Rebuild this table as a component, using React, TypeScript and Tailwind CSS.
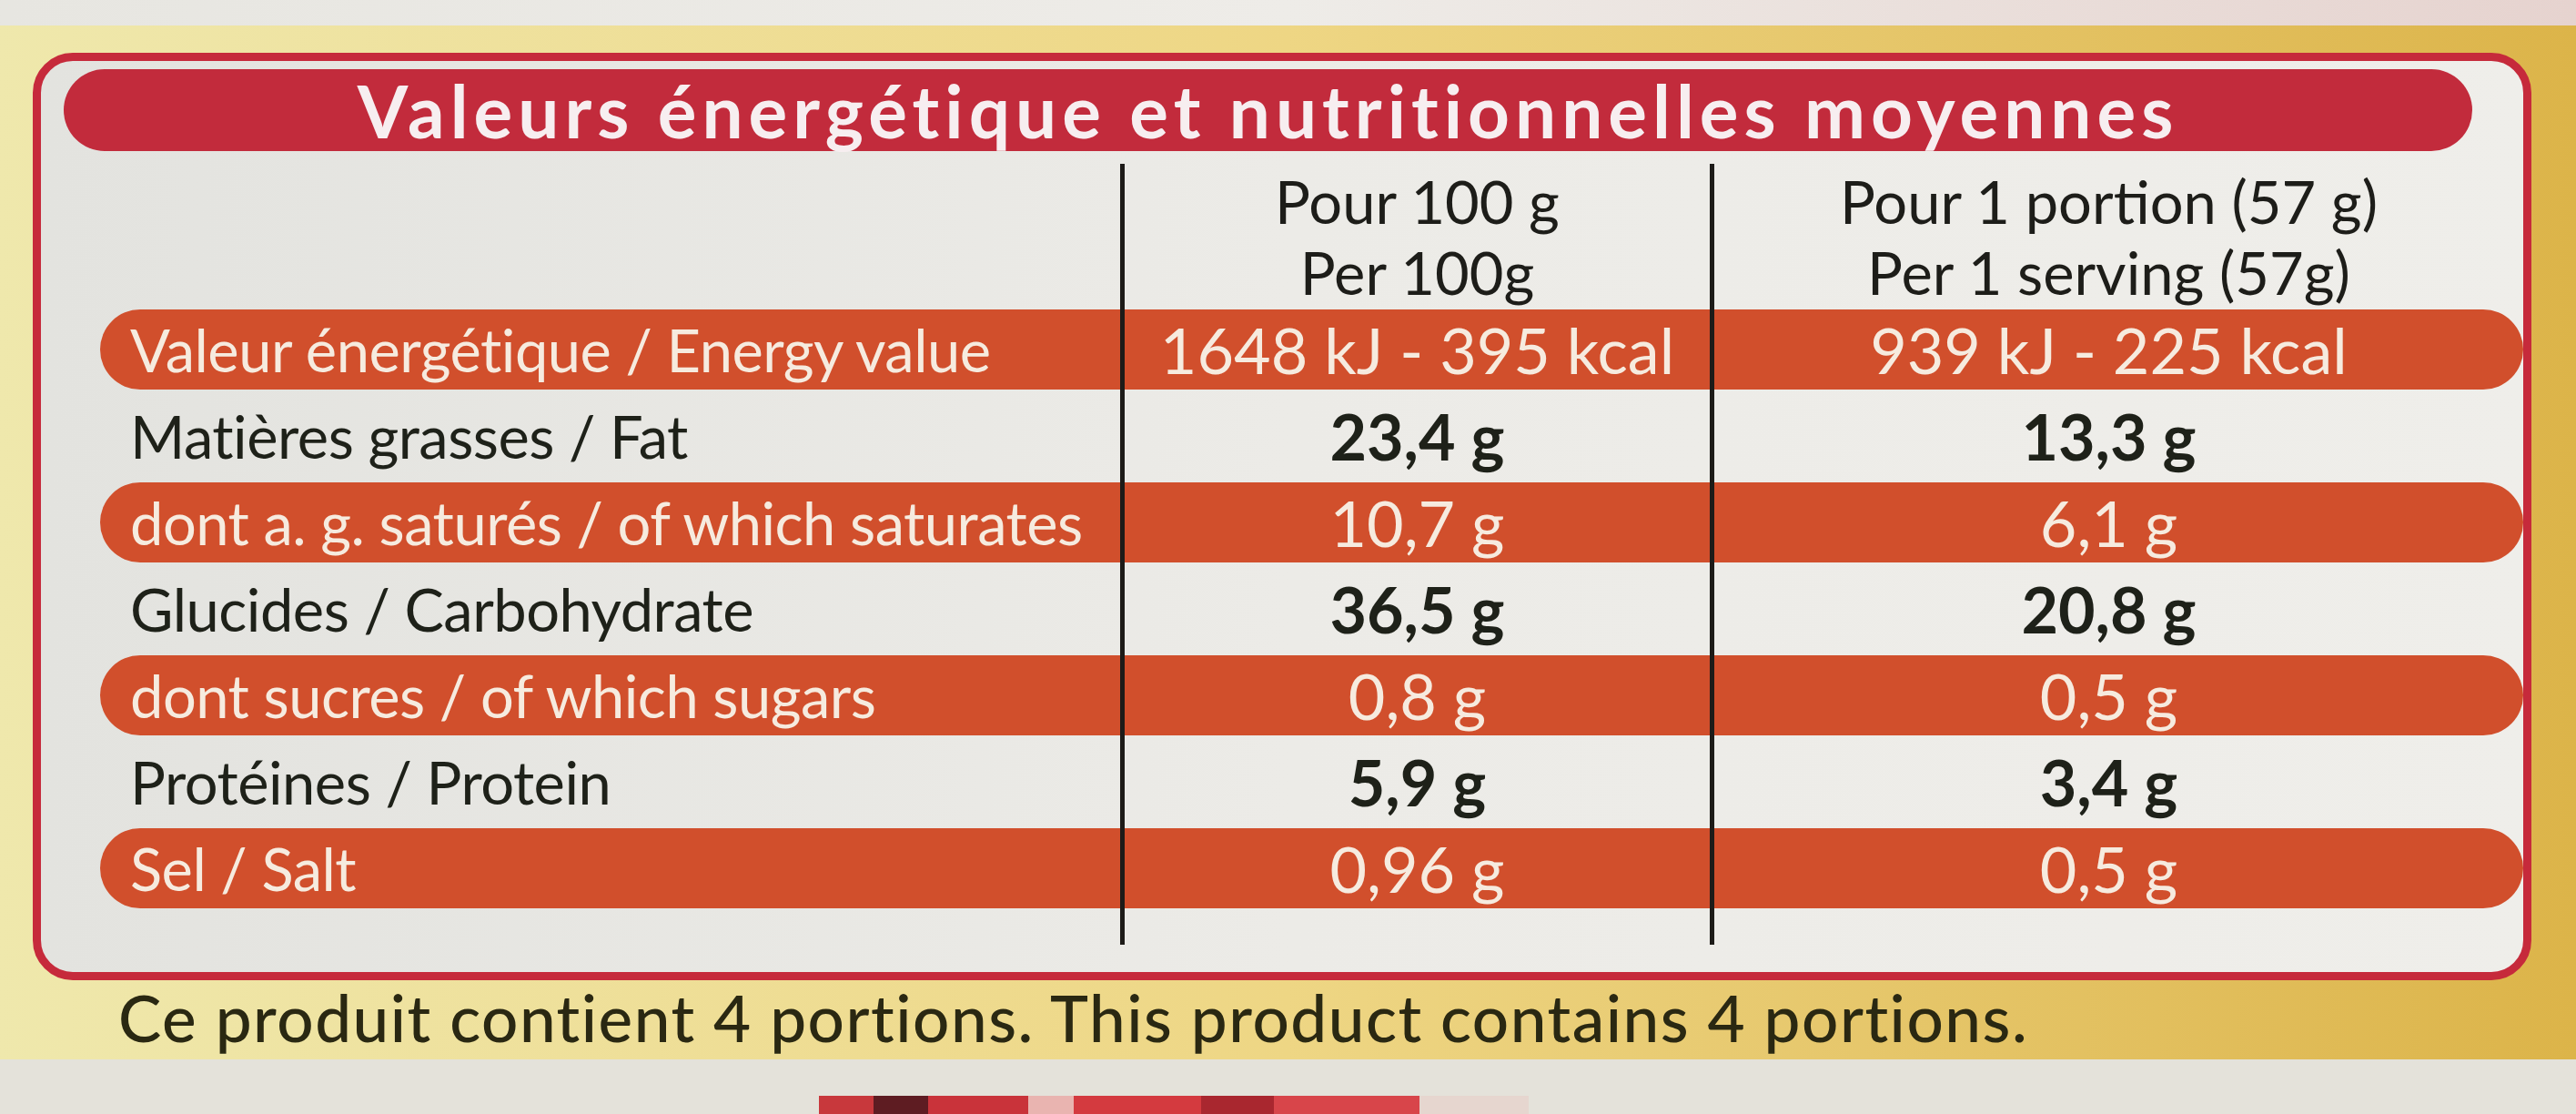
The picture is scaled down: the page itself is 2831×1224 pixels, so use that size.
const rows = [
  { label: "Valeur énergétique / Energy value", per100: "1648 kJ - 395 kcal", portion: "939 kJ - 225 kcal", band: true },
  { label: "Matières grasses / Fat", per100: "23,4 g", portion: "13,3 g", band: false },
  { label: "dont a. g. saturés / of which saturates", per100: "10,7 g", portion: "6,1 g", band: true },
  { label: "Glucides / Carbohydrate", per100: "36,5 g", portion: "20,8 g", band: false },
  { label: "dont sucres / of which sugars", per100: "0,8 g", portion: "0,5 g", band: true },
  { label: "Protéines / Protein", per100: "5,9 g", portion: "3,4 g", band: false },
  { label: "Sel / Salt", per100: "0,96 g", portion: "0,5 g", band: true },
];

const cols = "grid grid-cols-[1121px_648px_872px]";
const divider = "border-l-[5px] border-[#1d1b18]";

export default function App() {
  return (
    <div className="w-[2831px] h-[1224px] overflow-hidden flex flex-col font-['Lato','Open_Sans',sans-serif]">
      {/* background above the box */}
      <div className="h-[28px] shrink-0 bg-gradient-to-r from-[#e7e6e1] via-[#eeece8] to-[#e6d3cf]" />

      {/* yellow packaging */}
      <div className="flex-1 bg-gradient-to-r from-[#efe8ac] via-[#eed684] to-[#dcb449] pt-[30px]">
        {/* red frame */}
        <div className="ml-[36px] mr-[49px] rounded-[44px] border-[9px] border-[#c62a3b] bg-gradient-to-r from-[#e3e3df] via-[#ecebe7] to-[#efeeea] pt-[9px] pb-[30px]">
          {/* title band */}
          <div className="ml-[25px] mr-[56px] h-[90px] rounded-full bg-[#c22b3c] flex items-center justify-center">
            <span className="text-[80px] leading-none font-bold text-[#f7eef0] tracking-[6px]">
              Valeurs énergétique et nutritionnelles moyennes
            </span>
          </div>

          {/* table */}
          <div className="ml-[65px] mt-[14px]">
            {/* column headings */}
            <div className={`${cols} h-[160px]`}>
              <div />
              <div className={`${divider} flex flex-col items-center justify-center text-[65px] leading-[78px] text-[#1d1d19]`}>
                <span>Pour 100 g</span>
                <span>Per 100g</span>
              </div>
              <div className={`${divider} flex flex-col items-center justify-center text-[65px] leading-[78px] text-[#1d1d19]`}>
                <span>Pour 1 portion (57 g)</span>
                <span>Per 1 serving (57g)</span>
              </div>
            </div>

            {rows.map((row) => (
              <div
                key={row.label}
                className={
                  row.band
                    ? `${cols} h-[88px] rounded-full bg-[#d14f2c] text-[#f6ebdf]`
                    : `${cols} h-[102px] text-[#1e2119]`
                }
              >
                <div className="flex items-center pl-[33px] text-[65px] leading-none tracking-[-0.5px] whitespace-nowrap">
                  {row.label}
                </div>
                <div className={`${divider} flex items-center justify-center text-[70px] leading-none whitespace-nowrap ${row.band ? "" : "font-bold"}`}>
                  {row.per100}
                </div>
                <div className={`${divider} flex items-center justify-center text-[70px] leading-none whitespace-nowrap ${row.band ? "" : "font-bold"}`}>
                  {row.portion}
                </div>
              </div>
            ))}

            {/* dividers run a bit past the last band */}
            <div className={`${cols} h-[40px]`}>
              <div />
              <div className={divider} />
              <div className={divider} />
            </div>
          </div>
        </div>

        {/* footer note */}
        <p className="ml-[130px] mt-[6px] text-[71px] leading-[70px] font-medium tracking-[1.5px] text-[#2a2812] whitespace-nowrap">
          Ce produit contient 4 portions. This product contains 4 portions.
        </p>
      </div>

      {/* edge below the packaging */}
      <div className="h-[60px] shrink-0 flex flex-col bg-[#e4e2da]">
        <div className="flex-1" />
        <div className="h-[20px] flex">
          <div className="w-[900px]" />
          <div className="w-[60px] bg-[#c8383c]" />
          <div className="w-[60px] bg-[#5e1c22]" />
          <div className="w-[110px] bg-[#c9333a]" />
          <div className="w-[50px] bg-[#e9b4b0]" />
          <div className="w-[140px] bg-[#d43a3f]" />
          <div className="w-[80px] bg-[#a9272f]" />
          <div className="w-[160px] bg-[#d8454a]" />
          <div className="w-[120px] bg-[#e6d6cf]" />
        </div>
      </div>
    </div>
  );
}
